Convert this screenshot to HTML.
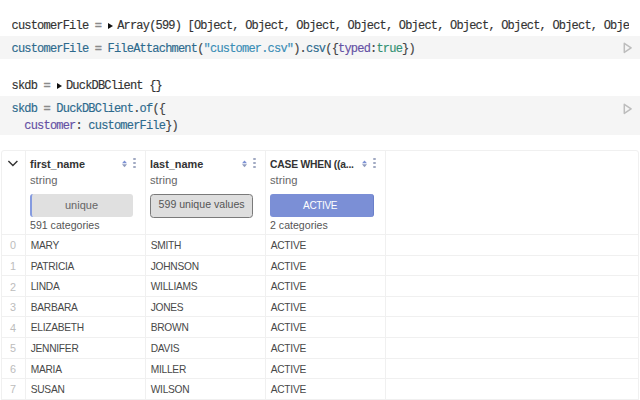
<!DOCTYPE html>
<html><head><meta charset="utf-8">
<style>
html,body{margin:0;padding:0;background:#fff;width:640px;height:400px;overflow:hidden;position:relative}
.m{position:absolute;font-family:"Liberation Mono",monospace;font-size:12px;letter-spacing:-0.8px;-webkit-text-stroke:0.15px currentColor;line-height:16.7px;white-space:pre;color:#333}
.band{position:absolute;left:0;width:640px;background:#f5f5f5}
.eq{color:#8a8a8a;-webkit-text-stroke:0.4px currentColor}
.d{color:#2d6a8d}
.s{color:#3a8db5}
.p{color:#6450a4}
.a{color:#339173}
.pu{color:#444}
.tri{display:inline-block;width:9.6px;height:10px;position:relative;vertical-align:baseline}
.tri:before{content:"";position:absolute;left:0.2px;top:4.1px;border-left:5px solid #111;border-top:3.3px solid transparent;border-bottom:3.3px solid transparent}
.play{position:absolute;width:9px;height:12px}
.t{position:absolute;font-family:"Liberation Sans",sans-serif;white-space:nowrap}
.hl{position:absolute;height:1px;background:#f0f0f0}
.vl{position:absolute;width:1px;background:#f0f0f0}
.hd{font-weight:bold;font-size:10.9px;line-height:14px;top:157px;color:#333}
.st{font-size:11.2px;line-height:14px;top:172.8px;color:#666}
.bx{font-size:10.6px;line-height:14px;top:197.3px}
.ct{font-size:10.6px;line-height:14px;top:217.5px;color:#555}
.ix{font-size:10.8px;line-height:20.55px;color:#bcbcbc;margin-top:0.8px}
.rw{font-size:10.2px;letter-spacing:-0.25px;line-height:20.55px;color:#484848;margin-top:1.5px}
</style></head><body>
<div class="m" style="left:11.5px;top:17.6px;width:617.5px;overflow:hidden"><span>customerFile</span> <span class="eq">=</span> <span class="tri" style="top:0"></span>Array(599) [Object, Object, Object, Object, Object, Object, Object, Object, Object, Object]</div>
<div class="band" style="top:35.5px;height:23.3px"></div>
<div class="m" style="left:11.5px;top:40.8px"><span class="d">customerFile</span> <span class="eq">=</span> <span class="d">FileAttachment</span><span class="pu">(</span><span class="s">"customer.csv"</span><span class="pu">).</span><span class="d">csv</span><span class="pu">({</span><span class="p">typed</span><span class="pu">:</span><span class="a">true</span><span class="pu">})</span></div>
<svg class="play" style="left:623.2px;top:42.3px" viewBox="0 0 9 12"><path d="M1.3 1.3 L8.1 5.85 L1.3 10.4 Z" fill="none" stroke="#bdbdbd" stroke-width="1.5" stroke-linejoin="round"/></svg>

<div class="m" style="left:11.5px;top:77.7px">skdb <span class="eq">=</span> <span class="tri"></span>DuckDBClient {}</div>
<div class="band" style="top:96px;height:39px"></div>
<div class="m" style="left:11.5px;top:100.8px"><span class="d">skdb</span> <span class="eq">=</span> <span class="d">DuckDBClient</span><span class="pu">.</span><span class="d">of</span><span class="pu">({</span>
  <span class="p">customer</span><span class="pu">:</span> <span class="d">customerFile</span><span class="pu">})</span></div>
<svg class="play" style="left:623.2px;top:102.5px" viewBox="0 0 9 12"><path d="M1.3 1.3 L8.1 5.85 L1.3 10.4 Z" fill="none" stroke="#bdbdbd" stroke-width="1.5" stroke-linejoin="round"/></svg>

<!-- table -->
<div id="table">
<div style="position:absolute;left:1px;top:149.6px;width:638px;height:300px;border:1px solid #f0f0f0;border-radius:3px 3px 0 0;box-sizing:border-box"></div>
<div class="vl" style="left:25px;top:150px;height:250px"></div>
<div class="vl" style="left:145px;top:150px;height:250px"></div>
<div class="vl" style="left:265px;top:150px;height:250px"></div>
<div class="vl" style="left:385px;top:150px;height:250px"></div>
<div class="hl" style="left:1.5px;width:637px;top:234.20px"></div>
<div class="hl" style="left:1.5px;width:637px;top:254.75px"></div>
<div class="hl" style="left:1.5px;width:637px;top:275.30px"></div>
<div class="hl" style="left:1.5px;width:637px;top:295.85px"></div>
<div class="hl" style="left:1.5px;width:637px;top:316.40px"></div>
<div class="hl" style="left:1.5px;width:637px;top:336.95px"></div>
<div class="hl" style="left:1.5px;width:637px;top:357.50px"></div>
<div class="hl" style="left:1.5px;width:637px;top:378.05px"></div>
<div class="hl" style="left:1.5px;width:637px;top:398.60px"></div>
<svg style="position:absolute;left:7px;top:159px" width="12" height="9" viewBox="0 0 12 9"><path d="M1.4 1.9 L5.9 6.4 L10.4 1.9" fill="none" stroke="#333" stroke-width="1.4"/></svg>
<div class="t hd" style="left:30px">first_name</div>
<div class="t st" style="left:30px">string</div>
<svg style="position:absolute;left:122px;top:159.5px" width="5" height="8" viewBox="0 0 5 8"><path d="M0 3.3 L2.5 0.4 L5 3.3Z" fill="#7b90d4"/><path d="M0 4.3 L2.5 7.3 L5 4.3Z" fill="#8f9bbd"/></svg>
<div style="position:absolute;left:133.05px;top:157.55px;width:2.5px;height:2.5px;border-radius:50%;background:#a0a9c2"></div>
<div style="position:absolute;left:133.05px;top:161.55px;width:2.5px;height:2.5px;border-radius:50%;background:#a0a9c2"></div>
<div style="position:absolute;left:133.05px;top:165.55px;width:2.5px;height:2.5px;border-radius:50%;background:#a0a9c2"></div>
<div class="t hd" style="left:150px">last_name</div>
<div class="t st" style="left:150px">string</div>
<svg style="position:absolute;left:242px;top:159.5px" width="5" height="8" viewBox="0 0 5 8"><path d="M0 3.3 L2.5 0.4 L5 3.3Z" fill="#7b90d4"/><path d="M0 4.3 L2.5 7.3 L5 4.3Z" fill="#8f9bbd"/></svg>
<div style="position:absolute;left:253.05px;top:157.55px;width:2.5px;height:2.5px;border-radius:50%;background:#a0a9c2"></div>
<div style="position:absolute;left:253.05px;top:161.55px;width:2.5px;height:2.5px;border-radius:50%;background:#a0a9c2"></div>
<div style="position:absolute;left:253.05px;top:165.55px;width:2.5px;height:2.5px;border-radius:50%;background:#a0a9c2"></div>
<div class="t hd" style="left:270px;letter-spacing:-0.2px;font-size:10.3px;margin-top:0.7px">CASE WHEN ((a...</div>
<div class="t st" style="left:270px">string</div>
<svg style="position:absolute;left:362px;top:159.5px" width="5" height="8" viewBox="0 0 5 8"><path d="M0 3.3 L2.5 0.4 L5 3.3Z" fill="#7b90d4"/><path d="M0 4.3 L2.5 7.3 L5 4.3Z" fill="#8f9bbd"/></svg>
<div style="position:absolute;left:373.05px;top:157.55px;width:2.5px;height:2.5px;border-radius:50%;background:#a0a9c2"></div>
<div style="position:absolute;left:373.05px;top:161.55px;width:2.5px;height:2.5px;border-radius:50%;background:#a0a9c2"></div>
<div style="position:absolute;left:373.05px;top:165.55px;width:2.5px;height:2.5px;border-radius:50%;background:#a0a9c2"></div>
<div style="position:absolute;left:29.6px;top:194px;width:103.8px;height:22.8px;background:#e0e0e0;border-radius:3px;border-left:2px solid #859be0;box-sizing:border-box"></div>
<div class="t bx" style="left:29.6px;width:103.8px;text-align:center;color:#666;font-size:11px;margin-top:0.8px">unique</div>
<div style="position:absolute;left:149.8px;top:193.5px;width:103.6px;height:24px;background:#dedede;border-radius:3.5px;border:1.2px solid #7a7a7a;box-sizing:border-box"></div>
<div class="t bx" style="left:149.8px;width:103.6px;text-align:center;color:#555">599 unique values</div>
<div style="position:absolute;left:269.6px;top:194px;width:104px;height:22.9px;background:#7b8fd6;border-radius:3px;border-right:1.5px solid #6a7fc9;box-sizing:border-box"></div>
<div class="t bx" style="left:269.6px;width:104px;text-align:center;color:#fff;font-size:10px;letter-spacing:-0.35px;text-indent:-3px;margin-top:1.6px">ACTIVE</div>
<div class="t ct" style="left:30px">591 categories</div>
<div class="t ct" style="left:270px">2 categories</div>
<div class="t ix" style="left:1.5px;width:23px;text-align:center;top:234.70px">0</div>
<div class="t rw" style="left:30.7px;top:234.70px">MARY</div>
<div class="t rw" style="left:150.7px;top:234.70px">SMITH</div>
<div class="t rw" style="left:270.7px;top:234.70px">ACTIVE</div>
<div class="t ix" style="left:1.5px;width:23px;text-align:center;top:255.25px">1</div>
<div class="t rw" style="left:30.7px;top:255.25px">PATRICIA</div>
<div class="t rw" style="left:150.7px;top:255.25px">JOHNSON</div>
<div class="t rw" style="left:270.7px;top:255.25px">ACTIVE</div>
<div class="t ix" style="left:1.5px;width:23px;text-align:center;top:275.80px">2</div>
<div class="t rw" style="left:30.7px;top:275.80px">LINDA</div>
<div class="t rw" style="left:150.7px;top:275.80px">WILLIAMS</div>
<div class="t rw" style="left:270.7px;top:275.80px">ACTIVE</div>
<div class="t ix" style="left:1.5px;width:23px;text-align:center;top:296.35px">3</div>
<div class="t rw" style="left:30.7px;top:296.35px">BARBARA</div>
<div class="t rw" style="left:150.7px;top:296.35px">JONES</div>
<div class="t rw" style="left:270.7px;top:296.35px">ACTIVE</div>
<div class="t ix" style="left:1.5px;width:23px;text-align:center;top:316.90px">4</div>
<div class="t rw" style="left:30.7px;top:316.90px">ELIZABETH</div>
<div class="t rw" style="left:150.7px;top:316.90px">BROWN</div>
<div class="t rw" style="left:270.7px;top:316.90px">ACTIVE</div>
<div class="t ix" style="left:1.5px;width:23px;text-align:center;top:337.45px">5</div>
<div class="t rw" style="left:30.7px;top:337.45px">JENNIFER</div>
<div class="t rw" style="left:150.7px;top:337.45px">DAVIS</div>
<div class="t rw" style="left:270.7px;top:337.45px">ACTIVE</div>
<div class="t ix" style="left:1.5px;width:23px;text-align:center;top:358.00px">6</div>
<div class="t rw" style="left:30.7px;top:358.00px">MARIA</div>
<div class="t rw" style="left:150.7px;top:358.00px">MILLER</div>
<div class="t rw" style="left:270.7px;top:358.00px">ACTIVE</div>
<div class="t ix" style="left:1.5px;width:23px;text-align:center;top:378.55px">7</div>
<div class="t rw" style="left:30.7px;top:378.55px">SUSAN</div>
<div class="t rw" style="left:150.7px;top:378.55px">WILSON</div>
<div class="t rw" style="left:270.7px;top:378.55px">ACTIVE</div>
</div>
</body></html>
